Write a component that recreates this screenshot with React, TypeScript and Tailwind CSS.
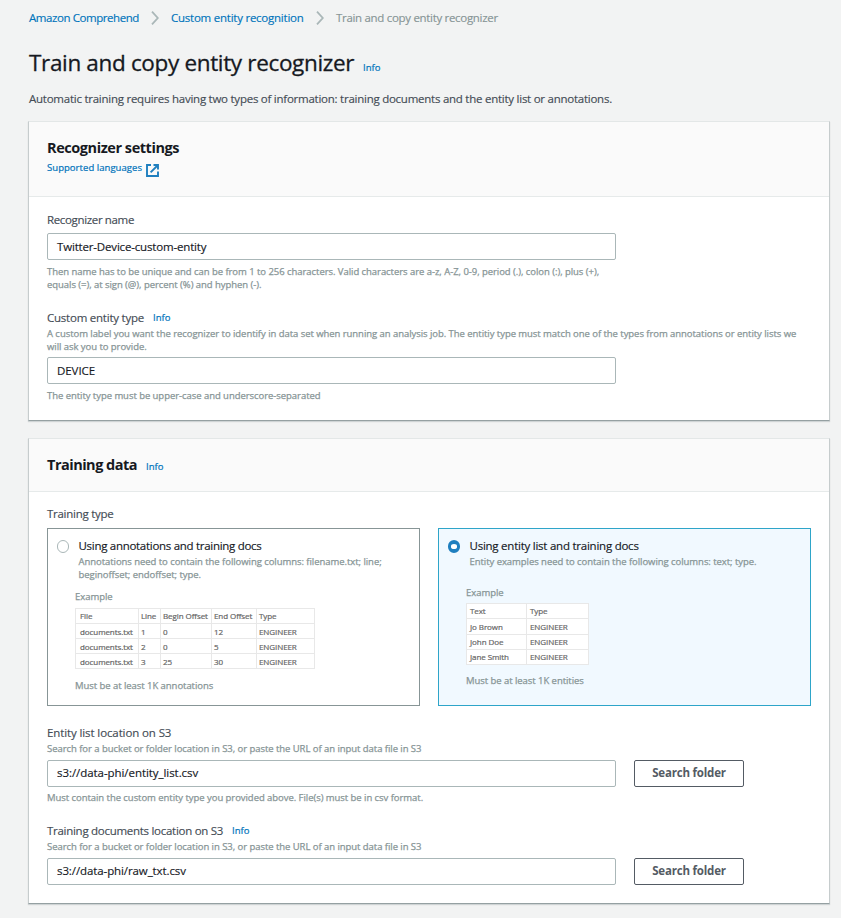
import type { ReactNode } from "react";

const SMALL =
  "text-[9.5px] leading-[13px] tracking-[-0.05px] text-[#879596] [-webkit-text-stroke:0.25px]";
const LABEL =
  "flex h-4 items-center text-[11.5px] leading-4 whitespace-nowrap text-[#444c55] [-webkit-text-stroke:0.15px]";
const INPUT =
  "flex h-[27px] w-[569px] shrink-0 items-center rounded-[2px] border border-[#aab7b8] bg-white px-[9px] text-[11.5px] whitespace-nowrap text-[#16191f] [-webkit-text-stroke:0.15px]";

function Chevron() {
  return (
    <svg width="8" height="14" viewBox="0 0 8 14" fill="none" stroke="#aab7b8" strokeWidth="1.8">
      <path d="M1 0.7 6.8 7 1 13.3" />
    </svg>
  );
}

function ExternalIcon() {
  return (
    <svg width="13" height="14" viewBox="0 0 13 14" fill="none" stroke="#1f7fbf" strokeWidth="1.9">
      <path d="M5 2H1v11h11V8.5" />
      <path d="M7.5 2H12v4.5M12 2 4.6 9.4" />
    </svg>
  );
}

function Info() {
  return (
    <a className="text-[9.5px] tracking-[0.05px] text-[#0073bb] [-webkit-text-stroke:0.2px]">Info</a>
  );
}

function Card({ header, headerClass, children }: { header: ReactNode; headerClass: string; children: ReactNode }) {
  return (
    <section className="w-[802px] border border-t-[#e3e7e7] border-r-[#c6cccd] border-b-[#95a0a2] border-l-[#c6cccd] bg-white shadow-[0_1px_1px_0_rgba(0,28,36,0.14)]">
      <header className={headerClass}>{header}</header>
      <div className="px-[18px]">{children}</div>
    </section>
  );
}

function Radio({ checked }: { checked?: boolean }) {
  return (
    <span
      className={
        checked
          ? "h-[13px] w-3 shrink-0 rounded-full border-[3.5px] border-x-[3px] border-y-4 border-[#1f7fbf] bg-white"
          : "h-[13px] w-3 shrink-0 rounded-full border border-[#aab7b8] bg-white"
      }
    />
  );
}

function ExampleTable({ grid, rows }: { grid: string; rows: string[][] }) {
  return (
    <div className={grid}>
      {rows.flatMap((row, r) =>
        row.map((cell, c) => (
          <span
            key={`${r}-${c}`}
            className="flex items-center border-r border-b border-[#e8e8e8] pl-[2px] text-[8px] leading-none tracking-[-0.08px] whitespace-nowrap text-[#666] [-webkit-text-stroke:0.2px]"
          >
            {cell}
          </span>
        )),
      )}
    </div>
  );
}

function SearchButton() {
  return (
    <button className="ml-[18px] flex h-[27px] w-[110px] items-center justify-center rounded-[2px] border border-[#545b64] bg-white pb-px text-[11.5px] font-bold tracking-[-0.2px] text-[#545b64]">
      Search folder
    </button>
  );
}

export default function App() {
  return (
    <main className="h-[918px] w-[841px] overflow-hidden bg-[#f2f3f3] pl-7 font-['Open_Sans','Noto_Sans',sans-serif] text-[#16191f]">
      <nav className="flex h-9 items-center pl-px text-[11.5px] whitespace-nowrap text-[#0073bb] [-webkit-text-stroke:0.15px]">
        <a className="w-[122px] tracking-[-0.43px]">Amazon Comprehend</a>
        <Chevron />
        <a className="ml-[12px] w-[145px] tracking-[-0.24px]">Custom entity recognition</a>
        <Chevron />
        <span className="ml-[12px] tracking-[-0.31px] text-[#879596]">Train and copy entity recognizer</span>
      </nav>
      <div className="mt-[9px] flex h-9 items-baseline pl-px whitespace-nowrap">
        <h1 className="w-[334px] text-[22.5px] leading-9 tracking-[-0.34px] [-webkit-text-stroke:0.3px]">
          Train and copy entity recognizer
        </h1>
        <Info />
      </div>
      <p className="mt-2 mb-3 h-5 pl-px text-[11.5px] leading-5 tracking-[-0.25px] whitespace-nowrap text-[#444c55] [-webkit-text-stroke:0.15px]">
        Automatic training requires having two types of information: training documents and the entity list or
        annotations.
      </p>

      <Card
        headerClass="h-[75px] border-b border-[#e6eaea] bg-[#fafafa] px-[18px] pt-4"
        header={
          <>
            <h2 className="text-[14.5px] leading-5 font-bold tracking-[-0.44px]">Recognizer settings</h2>
            <a className="mt-[3px] flex h-4 text-[9.5px] leading-[14px] tracking-[0.05px] text-[#0073bb] [-webkit-text-stroke:0.2px]">
              <span className="w-[99px]">Supported languages</span>
              <span className="pt-[2px]">
                <ExternalIcon />
              </span>
            </a>
          </>
        }
      >
        <div className={LABEL + " mt-[15px] tracking-[-0.35px]"}>Recognizer name</div>
        <div className={INPUT + " mt-[5px] tracking-[-0.17px]"}>Twitter-Device-custom-entity</div>
        <p className={SMALL + " mt-[5px] whitespace-nowrap"}>
          Then name has to be unique and can be from 1 to 256 characters. Valid characters are a-z, A-Z, 0-9, period
          (.), colon (:), plus (+),
          <br />
          equals (=), at sign (@), percent (%) and hyphen (-).
        </p>
        <div className={LABEL + " mt-[19px] tracking-[-0.23px]"}>
          <span className="w-[106px]">Custom entity type</span>
          <Info />
        </div>
        <p className={SMALL + " mt-px whitespace-nowrap"}>
          A custom label you want the recognizer to identify in data set when running an analysis job. The entitiy type
          must match one of the types from annotations or entity lists we
          <br />
          will ask you to provide.
        </p>
        <div className={INPUT + " mt-1 tracking-[-0.07px]"}>DEVICE</div>
        <p className={SMALL + " mt-[5px] mb-[18px]"}>The entity type must be upper-case and underscore-separated</p>
      </Card>

      <div className="h-[17px]" />

      <Card
        headerClass="flex h-[53px] items-baseline border-b border-[#e6eaea] bg-[#fafafa] px-[18px] pt-4"
        header={
          <>
            <h2 className="w-[99px] text-[14.5px] leading-5 font-bold tracking-[-0.5px]">Training data</h2>
            <Info />
          </>
        }
      >
        <div className={LABEL + " mt-[14px] tracking-[-0.27px]"}>Training type</div>
        <div className="mt-[6px] flex gap-[18px]">
          <div className="h-[178px] w-[373px] border border-[#879596] bg-white pt-[9px] pl-[9px]">
            <div className="flex h-4 items-center gap-[9.5px]">
              <Radio />
              <span className="text-[11.5px] tracking-[-0.29px] whitespace-nowrap [-webkit-text-stroke:0.15px]">
                Using annotations and training docs
              </span>
            </div>
            <p className={SMALL + " mt-px ml-[21.5px] whitespace-nowrap"}>
              Annotations need to contain the following columns: filename.txt; line;
              <br />
              beginoffset; endoffset; type.
            </p>
            <div className="ml-[18px]">
              <p className={SMALL + " mt-[9px] mb-[5px]"}>Example</p>
              <ExampleTable
                grid="grid w-[240px] grid-cols-[63px_22px_51px_45px_58px] grid-rows-[15px_15px_15px_15px] border-t border-l border-[#e8e8e8] bg-white [&>*:nth-child(5n+1)]:pl-[4px] [&>*:nth-child(n+6)]:pt-[2px]"
                rows={[
                  ["File", "Line", "Begin Offset", "End Offset", "Type"],
                  ["documents.txt", "1", "0", "12", "ENGINEER"],
                  ["documents.txt", "2", "0", "5", "ENGINEER"],
                  ["documents.txt", "3", "25", "30", "ENGINEER"],
                ]}
              />
              <p className={SMALL + " mt-[10px]"}>Must be at least 1K annotations</p>
            </div>
          </div>
          <div className="h-[178px] w-[373px] border border-[#2ea5c9] bg-[#f1f9ff] pt-[9px] pl-[9px]">
            <div className="flex h-4 items-center gap-[9.5px]">
              <Radio checked />
              <span className="text-[11.5px] tracking-[-0.24px] whitespace-nowrap [-webkit-text-stroke:0.15px]">
                Using entity list and training docs
              </span>
            </div>
            <p className={SMALL + " mt-px ml-[21.5px] whitespace-nowrap"}>
              Entity examples need to contain the following columns: text; type.
            </p>
            <div className="ml-[18px]">
              <p className={SMALL + " mt-[18px] mb-[4px]"}>Example</p>
              <ExampleTable
                grid="grid w-[123px] grid-cols-[60px_62px] grid-rows-[15px_16px_15px_15px] border-t border-l border-[#e8e8e8] bg-white [&>*]:pl-[3px]"
                rows={[
                  ["Text", "Type"],
                  ["Jo Brown", "ENGINEER"],
                  ["John Doe", "ENGINEER"],
                  ["Jane Smith", "ENGINEER"],
                ]}
              />
              <p className={SMALL + " mt-[9px]"}>Must be at least 1K entities</p>
            </div>
          </div>
        </div>

        <div className={LABEL + " mt-[19px] tracking-[-0.11px]"}>Entity list location on S3</div>
        <p className={SMALL + " mt-px"}>
          Search for a bucket or folder location in S3, or paste the URL of an input data file in S3
        </p>
        <div className="mt-[5px] flex">
          <div className={INPUT + " pb-px tracking-[-0.06px]"}>s3://data-phi/entity_list.csv</div>
          <SearchButton />
        </div>
        <p className={SMALL + " mt-1"}>
          Must contain the custom entity type you provided above. File(s) must be in csv format.
        </p>
        <div className={LABEL + " mt-[19px] tracking-[-0.28px]"}>
          <span className="w-[185px]">Training documents location on S3</span>
          <Info />
        </div>
        <p className={SMALL + " mt-px"}>
          Search for a bucket or folder location in S3, or paste the URL of an input data file in S3
        </p>
        <div className="mt-[5px] mb-[18px] flex">
          <div className={INPUT + " pb-px tracking-[-0.1px]"}>s3://data-phi/raw_txt.csv</div>
          <SearchButton />
        </div>
      </Card>
    </main>
  );
}
